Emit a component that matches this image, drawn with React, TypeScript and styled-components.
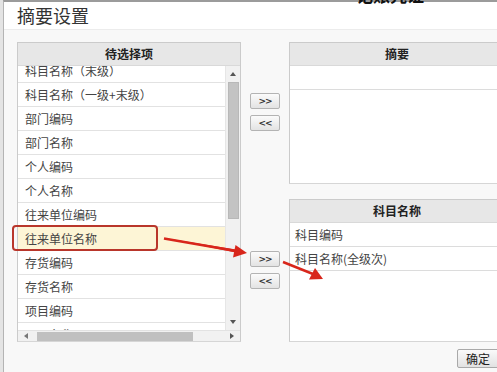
import styled, { createGlobalStyle } from "styled-components";

/**
 * >>> Style
 */
const GlobalStyle = createGlobalStyle`
  html, body {
    margin: 0;
    padding: 0;
    background: #e4e4e4;
  }
  * {
    box-sizing: border-box;
  }
`;
const Screen = styled.div`
  position: relative;

  width: 497px;
  height: 372px;

  overflow: hidden;
  background: #e4e4e4;

  font-family: "Liberation Sans", "Noto Sans CJK SC", sans-serif;
  color: #333333;
`;
const BackText = styled.span`
  position: absolute;
  top: -18px;
  left: 356px;
  z-index: 3;

  font-family: "Noto Sans CJK SC", sans-serif;
  font-weight: 700;
  font-size: 17px;
  color: #111111;
`;
const Dialog = styled.div`
  display: flex;
  flex-direction: column;

  height: 372px;
  margin-left: 3px;

  background: #f8f8f8;
  border-top: 2px solid #9b9b9b;
  border-left: 1px solid #b4b4b4;
`;
const TitleBar = styled.div`
  height: 28px;

  padding-left: 13px;

  background: #ffffff;
  border-bottom: 1px solid #ececec;

  font-family: "Noto Sans CJK SC", sans-serif;
  font-size: 18px;
  line-height: 26px;
  color: #333333;
`;
const Body = styled.div`
  display: flex;
  align-items: flex-start;

  padding: 12px 0 0 13px;
`;
const Panel = styled.div<{ $height: number }>`
  flex: none;

  display: flex;
  flex-direction: column;

  height: ${(p) => p.$height}px;

  background: #ffffff;
  border: 1px solid #cbcbcb;
  border-bottom-color: #d6d6d6;
  overflow: hidden;
`;
const PanelHeader = styled.div`
  flex: none;

  height: 23px;

  background: #e7e7e7;
  border-bottom: 1px solid #d9d9d9;

  font-family: "Noto Sans CJK SC", sans-serif;
  font-weight: 700;
  font-size: 12px;
  line-height: 22px;
  text-align: center;
  color: #222222;
`;
const LeftPanel = styled(Panel)`
  width: 224px;
`;
const ListArea = styled.div`
  flex: 1;

  display: flex;
  min-height: 0;
`;
const List = styled.div`
  flex: 1;

  overflow: hidden;
`;
const Rows = styled.div`
  margin-top: -7px;
`;
const Row = styled.div<{ $active?: boolean }>`
  height: 24px;

  padding-left: 7px;

  background: ${(p) => (p.$active ? "#fdf5d6" : "#ffffff")};
  border-bottom: 1px solid #e2e2e2;

  font-family: "Noto Sans CJK SC", sans-serif;
  font-size: 12px;
  line-height: 23px;
  color: #444444;
  white-space: nowrap;
`;
const VScroll = styled.div`
  flex: none;

  display: flex;
  flex-direction: column;
  align-items: center;

  width: 15px;

  background: #f1f1f1;
  border-left: 1px solid #e6e6e6;
`;
const ArrowBox = styled.div`
  flex: none;

  display: flex;
  align-items: center;
  justify-content: center;

  width: 13px;
  height: 16px;
`;
const Tri = styled.span<{ $dir: "up" | "down" | "left" | "right" }>`
  width: 0;
  height: 0;

  border: 3px solid transparent;
  ${(p) =>
    p.$dir === "up"
      ? "border-bottom: 4px solid #555; border-top-width: 0;"
      : p.$dir === "down"
      ? "border-top: 4px solid #555; border-bottom-width: 0;"
      : p.$dir === "left"
      ? "border-right: 4px solid #777; border-left-width: 0;"
      : "border-left: 4px solid #555; border-right-width: 0;"}
`;
const VThumb = styled.div`
  width: 11px;
  height: 137px;

  background: #c3c3c3;
  border: 1px solid #b8b8b8;
`;
const VTrack = styled.div`
  flex: 1;
`;
const HScroll = styled.div`
  flex: none;

  display: flex;
  align-items: center;

  height: 11px;

  background: #f1f1f1;
  border-top: 1px solid #e2e2e2;
`;
const HArrow = styled.div`
  display: flex;
  align-items: center;
  justify-content: center;

  width: 16px;
  height: 10px;
`;
const HThumb = styled.div`
  width: 156px;
  height: 9px;
  margin-left: 3px;

  background: #c0c0c0;
`;
const HTrack = styled.div`
  flex: 1;
`;
const Middle = styled.div`
  flex: none;

  display: flex;
  flex-direction: column;
  align-items: center;

  width: 48px;
  padding-top: 51px;
`;
const ButtonGroup = styled.div<{ $gap: number }>`
  display: flex;
  flex-direction: column;
  gap: 6px;

  margin-bottom: ${(p) => p.$gap}px;
`;
const MoveButton = styled.button`
  width: 30px;
  height: 16px;

  padding: 0;

  background: linear-gradient(#fbfbfb, #e3e3e3);
  border: 1px solid #b3b3b3;
  border-radius: 2px;

  font-family: "DejaVu Sans", sans-serif;
  font-weight: 700;
  font-size: 9px;
  line-height: 13px;
  color: #333333;
  letter-spacing: -1px;
`;
const Right = styled.div`
  flex: none;

  display: flex;
  flex-direction: column;

  width: 214px;
`;
const RightPanel = styled(Panel)`
  width: 216px;
`;
const SelectedRow = styled.div`
  height: 24px;

  padding-left: 5px;

  border-bottom: 1px solid #dcdcdc;

  font-family: "Noto Sans CJK SC", sans-serif;
  font-size: 12px;
  line-height: 23px;
  color: #444444;
`;
const Spacer = styled.div`
  height: 15px;
`;
const Footer = styled.div`
  display: flex;

  padding: 7px 0 0 168px;
`;
const OkButton = styled.button`
  width: 42px;
  height: 19px;

  padding: 0;

  background: linear-gradient(#fafafa, #e2e2e2);
  border: 1px solid #a9a9a9;
  border-radius: 2px;

  font-family: "Noto Sans CJK SC", sans-serif;
  font-size: 12px;
  line-height: 16px;
  color: #222222;
`;
const Marks = styled.svg`
  position: absolute;
  top: 0;
  left: 0;
  z-index: 2;

  pointer-events: none;
`;
// <<< Style

const OPTIONS = [
  "科目名称（末级）",
  "科目名称（一级+末级）",
  "部门编码",
  "部门名称",
  "个人编码",
  "个人名称",
  "往来单位编码",
  "往来单位名称",
  "存货编码",
  "存货名称",
  "项目编码",
  "项目名称",
];

const App = () => {
  return (
    <Screen>
      <GlobalStyle />
      <BackText>记账凭证</BackText>
      <Dialog>
        <TitleBar>摘要设置</TitleBar>
        <Body>
          <LeftPanel $height={300}>
            <PanelHeader>待选择项</PanelHeader>
            <ListArea>
              <List>
                <Rows>
                  {OPTIONS.map((o) => (
                    <Row key={o} $active={o === "往来单位名称"}>
                      {o}
                    </Row>
                  ))}
                </Rows>
              </List>
              <VScroll>
                <ArrowBox>
                  <Tri $dir="up" />
                </ArrowBox>
                <VThumb />
                <VTrack />
                <ArrowBox>
                  <Tri $dir="down" />
                </ArrowBox>
              </VScroll>
            </ListArea>
            <HScroll>
              <HArrow>
                <Tri $dir="left" />
              </HArrow>
              <HThumb />
              <HTrack />
              <HArrow>
                <Tri $dir="right" />
              </HArrow>
            </HScroll>
          </LeftPanel>

          <Middle>
            <ButtonGroup $gap={120}>
              <MoveButton>&gt;&gt;</MoveButton>
              <MoveButton>&lt;&lt;</MoveButton>
            </ButtonGroup>
            <ButtonGroup $gap={0}>
              <MoveButton>&gt;&gt;</MoveButton>
              <MoveButton>&lt;&lt;</MoveButton>
            </ButtonGroup>
          </Middle>

          <Right>
            <RightPanel $height={142}>
              <PanelHeader>摘要</PanelHeader>
              <SelectedRow />
            </RightPanel>
            <Spacer />
            <RightPanel $height={143}>
              <PanelHeader>科目名称</PanelHeader>
              <SelectedRow>科目编码</SelectedRow>
              <SelectedRow>科目名称(全级次)</SelectedRow>
            </RightPanel>
            <Footer>
              <OkButton>确定</OkButton>
            </Footer>
          </Right>
        </Body>
      </Dialog>

      {/* 截图上的红色标注 */}
      <Marks width="497" height="372" viewBox="0 0 497 372">
        <rect
          x="13"
          y="226"
          width="144"
          height="24"
          rx="3"
          fill="none"
          stroke="#b9362b"
          strokeWidth="2"
        />
        <path d="M164 238 L236 249.5 L235.5 252.5 Z" fill="#d8261b" />
        <line x1="164" y1="238.5" x2="236" y2="251" stroke="#d8261b" strokeWidth="2.5" />
        <polygon points="247,253 233,257.5 235.5,245" fill="#d8261b" />
        <line x1="283" y1="262" x2="313" y2="274" stroke="#d8261b" strokeWidth="2.5" />
        <polygon points="323,279 309,279.5 315,268" fill="#d8261b" />
      </Marks>
    </Screen>
  );
};

export default App;
